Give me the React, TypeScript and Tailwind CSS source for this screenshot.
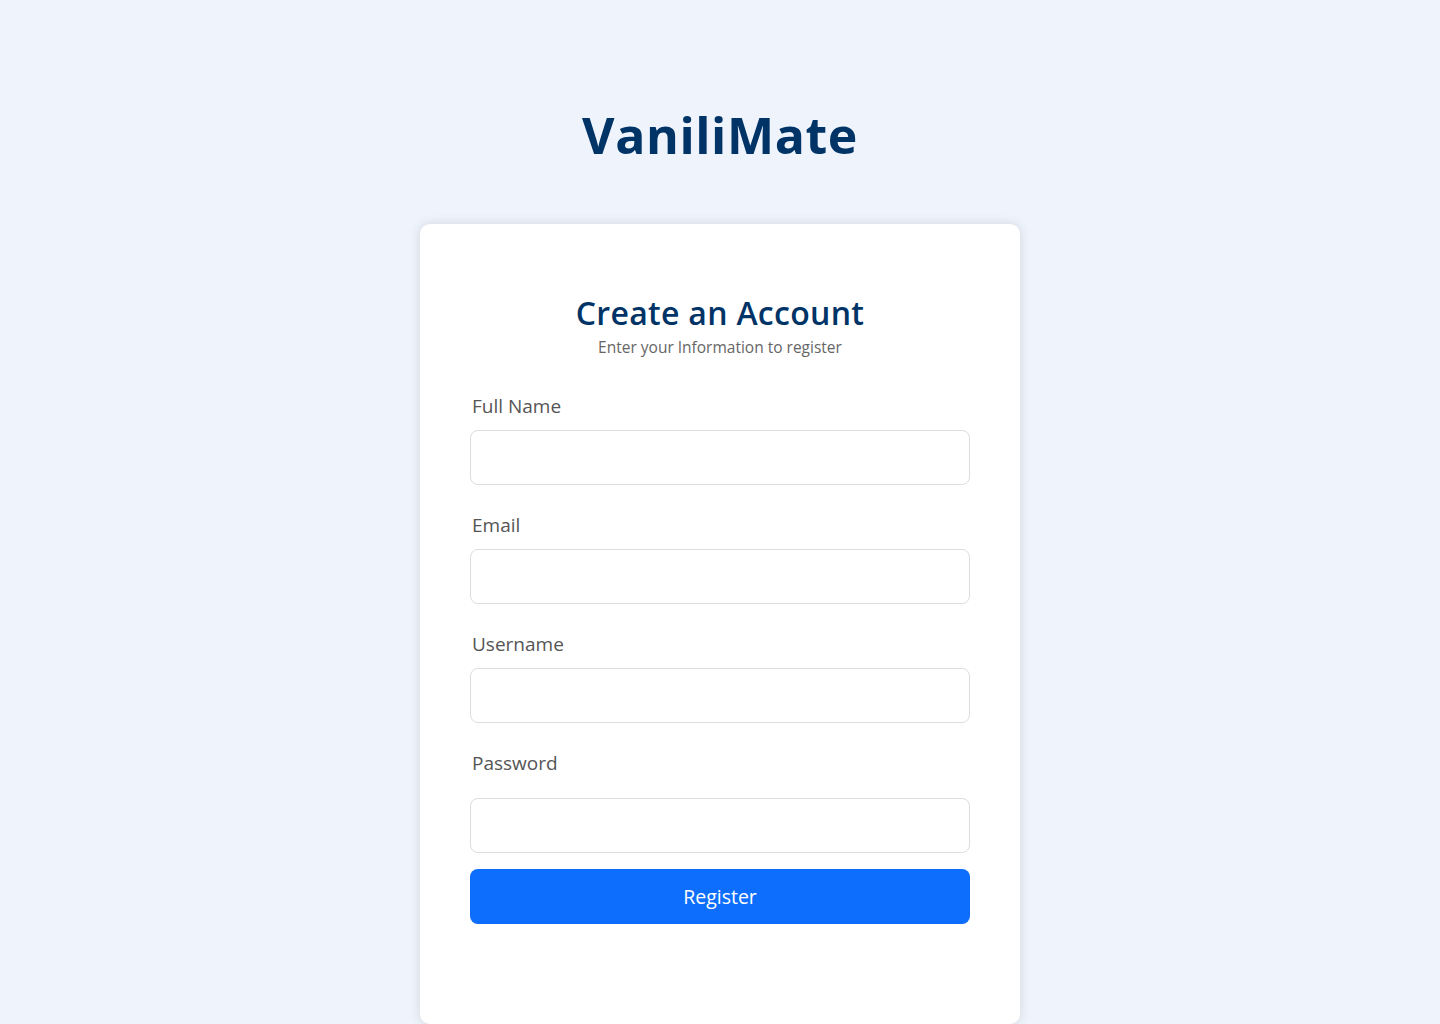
export default function App() {
  const fields = ["Full Name", "Email", "Username"];
  return (
    <div className="min-h-screen bg-[#eff4fc] flex flex-col items-center font-['Open_Sans',sans-serif] overflow-hidden h-[1024px]">
      <h1 className="mt-[100px] text-[50px] leading-[70px] font-bold text-[#003366] tracking-[0.6px]">
        VaniliMate
      </h1>
      <div className="mt-[54px] w-[600px] bg-white rounded-[10px] shadow-[0_0_12px_rgba(0,0,0,0.12)] px-[50px] pt-[69px] pb-[100px]">
        <div className="text-center">
          <h2 className="text-[32px] leading-[40px] font-semibold text-[#003366] tracking-[0.3px]">Create an Account</h2>
          <p className="mt-[4px] text-[15.5px] leading-[20px] text-[#666]">Enter your Information to register</p>
        </div>
        <form className="mt-[36px] flex flex-col">
          {fields.map((f) => (
            <div key={f} className="mb-[27px]">
              <label className="block px-[2px] text-[19px] leading-[26px] font-medium text-[#555]">{f}</label>
              <input
                type="text"
                className="mt-[11px] block w-full h-[55px] rounded-[8px] border border-[#dddddd] bg-white outline-none"
              />
            </div>
          ))}
          <div>
            <label className="block px-[2px] text-[19px] leading-[26px] font-medium text-[#555]">Password</label>
            <input
              type="password"
              className="mt-[22px] block w-full h-[55px] rounded-[8px] border border-[#dddddd] bg-white outline-none"
            />
          </div>
          <button
            type="button"
            className="mt-[16px] h-[55px] w-full rounded-[8px] bg-[#0d6efd] text-white text-[19.5px] font-medium"
          >
            Register
          </button>
        </form>
      </div>
    </div>
  );
}
